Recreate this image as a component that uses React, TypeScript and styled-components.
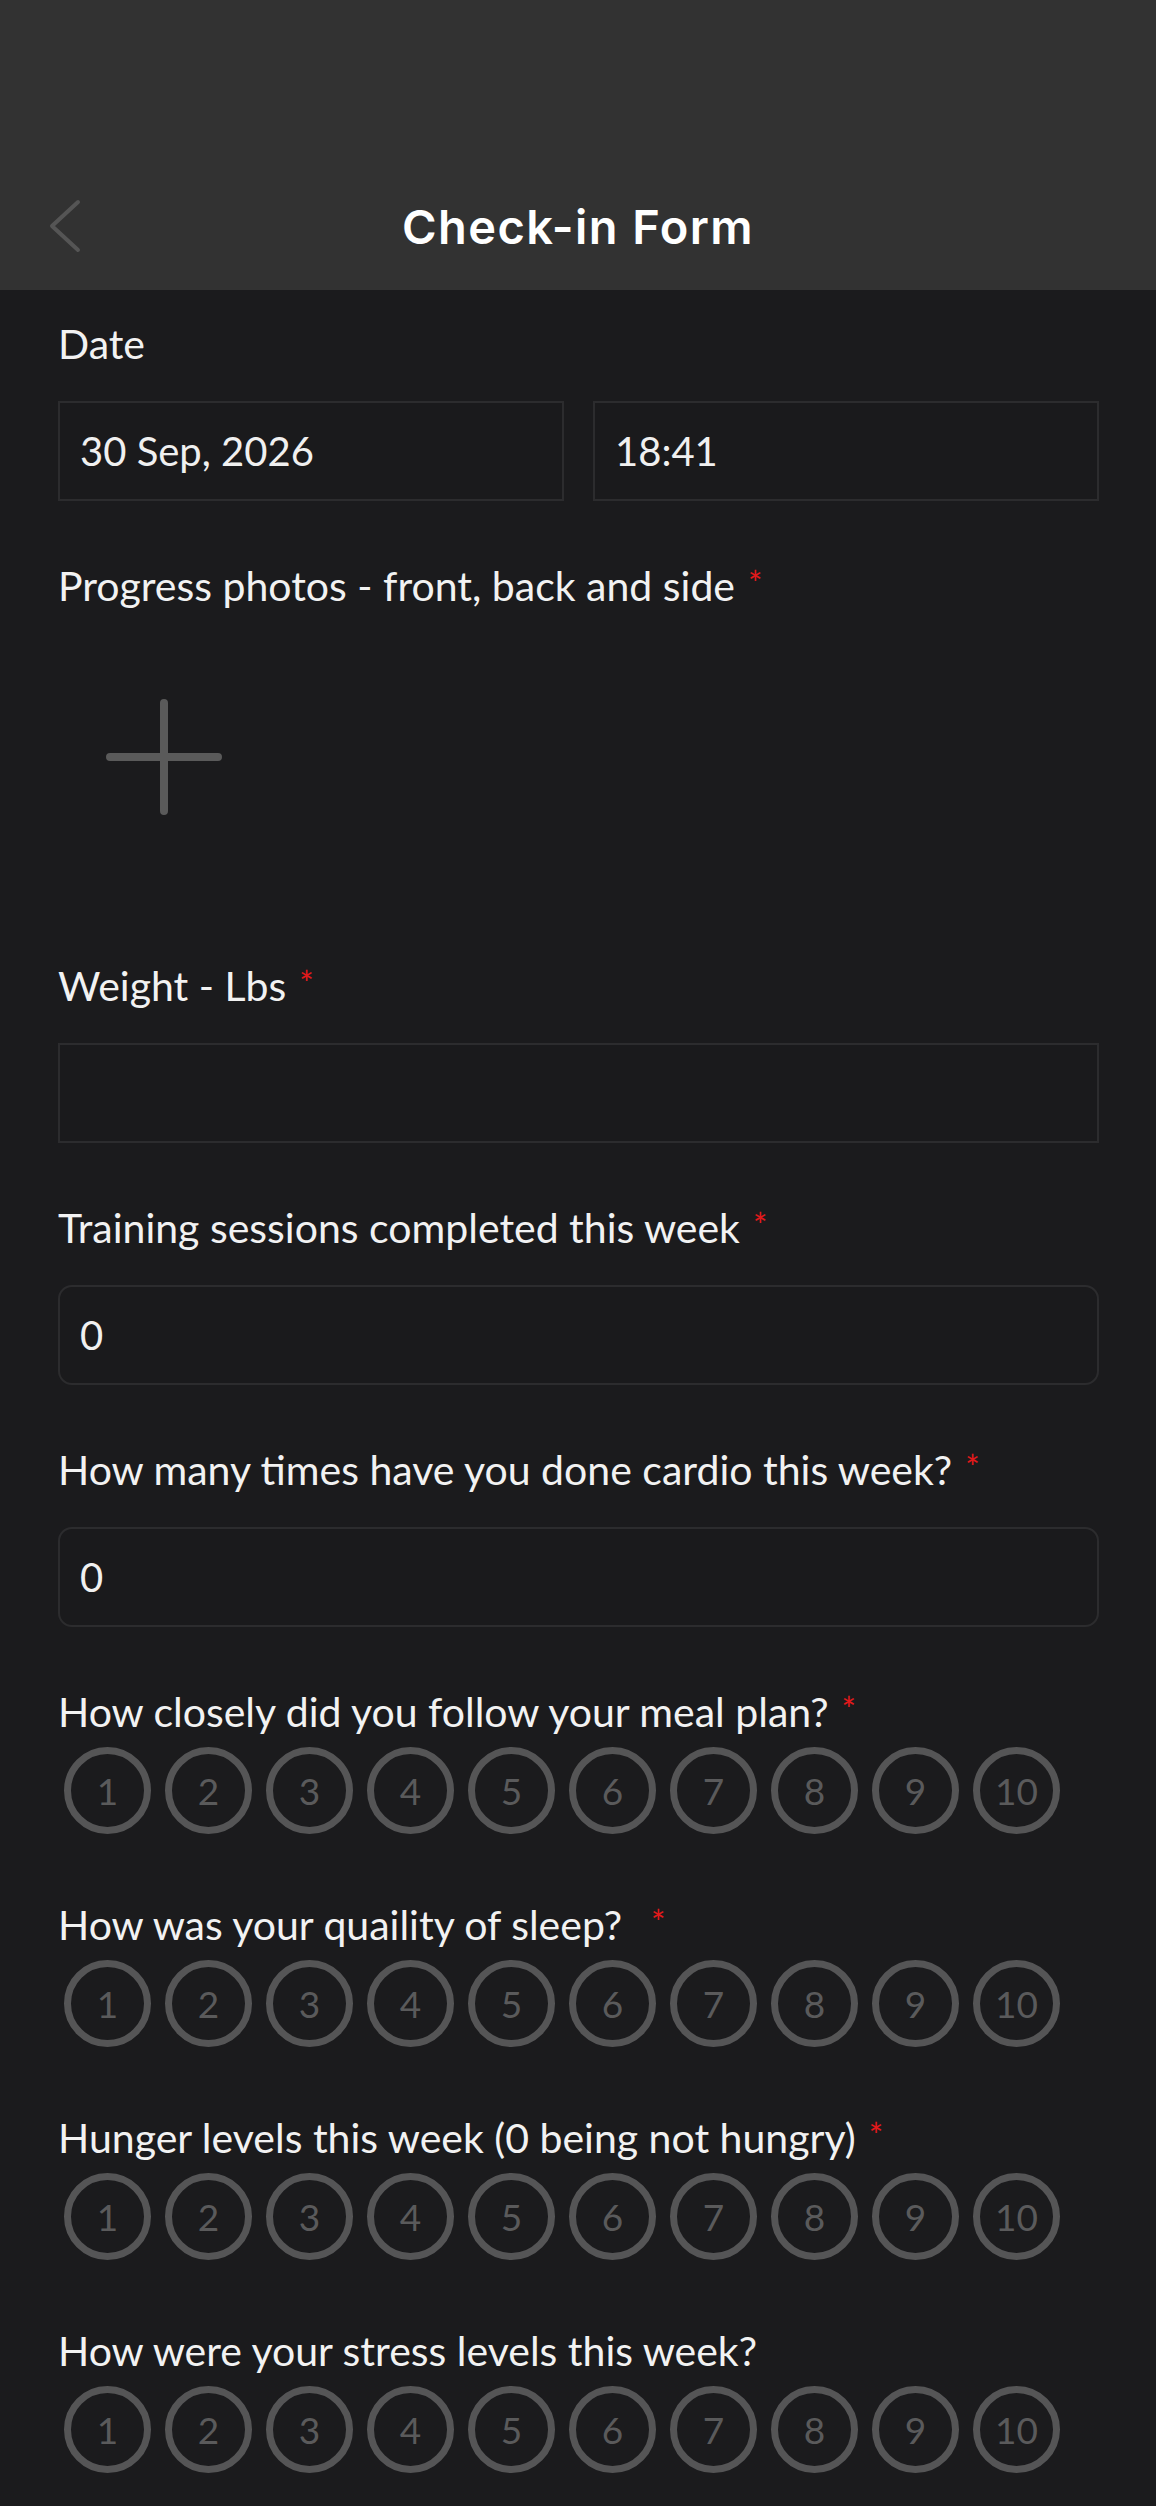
import styled, { createGlobalStyle } from "styled-components";

const GlobalStyle = createGlobalStyle`
  html, body {
    margin: 0;
    padding: 0;
    background: #1b1b1d;
  }
  * {
    box-sizing: border-box;
  }
`;

const Page = styled.div`
  min-height: 2506px;
  background: #1b1b1d;
  font-family: Lato, "Noto Sans", sans-serif;
  color: #f2f2f2;
`;

const Header = styled.header`
  height: 290px;
  background: #323232;
  display: flex;
  flex-direction: column;
  justify-content: flex-end;
`;

const NavBar = styled.div`
  height: 128px;
  display: grid;
  grid-template-columns: 1fr auto 1fr;
  align-items: center;
`;

const BackButton = styled.button`
  justify-self: start;
  margin-left: 46px;
  padding: 0;
  border: none;
  background: none;
  display: flex;
  align-items: center;
`;

const Title = styled.h1`
  margin: 0;
  font-family: Inter, "Noto Sans", sans-serif;
  font-weight: 600;
  font-size: 47px;
  letter-spacing: 1.4px;
  color: #ffffff;
`;

const Form = styled.form`
  display: flex;
  flex-direction: column;
  gap: 57px;
  padding: 26px 57px 29px 58px;
`;

const Field = styled.div<{ $gap: number; $push?: number }>`
  display: flex;
  flex-direction: column;
  gap: ${p => p.$gap}px;
  margin-top: ${p => p.$push ?? 0}px;
`;

const Label = styled.label`
  font-size: 41px;
  line-height: 56px;
  color: #f2f2f2;
  white-space: nowrap;
`;

const Req = styled.span<{ $space?: number }>`
  color: #e3191b;
  font-size: 34px;
  vertical-align: 5px;
  line-height: 1;
  margin-left: ${p => p.$space ?? 13}px;
`;

const Row = styled.div`
  display: grid;
  grid-template-columns: 1fr 1fr;
  gap: 29px;
`;

const Input = styled.div<{ $rounded?: boolean }>`
  height: 100px;
  border: 2px solid #2c2c2e;
  border-radius: ${p => (p.$rounded ? "14px" : "0")};
  background: #1a1a1c;
  display: flex;
  align-items: center;
  padding-left: 20px;
  font-size: 40px;
  color: #f0f0f0;
`;

const PhotoSlot = styled.button`
  width: 212px;
  height: 258px;
  border: none;
  background: none;
  padding: 56px 0 0;
  display: flex;
  align-items: flex-start;
  justify-content: center;
`;

const Scale = styled.div`
  display: flex;
  gap: 14px;
  padding-left: 6px;
`;

const Dot = styled.button`
  width: 87px;
  height: 87px;
  border-radius: 50%;
  border: 7px solid #555556;
  background: transparent;
  padding: 0;
  display: flex;
  align-items: center;
  justify-content: center;
  font-family: Lato, "Noto Sans", sans-serif;
  font-size: 37px;
  color: #5a5a5b;
`;

function Rating() {
  return (
    <Scale>
      {Array.from({ length: 10 }, (_, i) => (
        <Dot key={i} type="button">
          {i + 1}
        </Dot>
      ))}
    </Scale>
  );
}

const ratings = [
  { label: "How closely did you follow your meal plan?", req: true, push: 0 },
  { label: "How was your quaility of sleep?", req: true, space: 29, push: 6 },
  { label: "Hunger levels this week (0 being not hungry)", req: true, push: 6 },
  { label: "How were your stress levels this week?", req: false, push: 6 },
];

function App() {
  return (
    <Page>
      <GlobalStyle />
      <Header>
        <NavBar>
          <BackButton type="button" aria-label="Back">
            <svg width="36" height="56" viewBox="0 0 36 56">
              <path d="M32 4 L6 28 L32 52" fill="none" stroke="#555555" strokeWidth="4" strokeLinecap="round" strokeLinejoin="round" />
            </svg>
          </BackButton>
          <Title>Check-in Form</Title>
          <span />
        </NavBar>
      </Header>

      <Form>
        <Field $gap={29}>
          <Label>Date</Label>
          <Row>
            <Input>30 Sep, 2026</Input>
            <Input>18:41</Input>
          </Row>
        </Field>

        <Field $gap={29}>
          <Label>
            Progress photos - front, back and side<Req>*</Req>
          </Label>
          <PhotoSlot type="button" aria-label="Add photo">
            <svg width="116" height="116" viewBox="0 0 116 116">
              <path d="M58 4 V112 M4 58 H112" stroke="#5a5a5a" strokeWidth="8" strokeLinecap="round" />
            </svg>
          </PhotoSlot>
        </Field>

        <Field $gap={29}>
          <Label>
            Weight - Lbs<Req>*</Req>
          </Label>
          <Input />
        </Field>

        <Field $gap={29}>
          <Label>
            Training sessions completed this week<Req>*</Req>
          </Label>
          <Input $rounded>0</Input>
        </Field>

        <Field $gap={29}>
          <Label>
            How many times have you done cardio this week?<Req>*</Req>
          </Label>
          <Input $rounded>0</Input>
        </Field>

        {ratings.map(r => (
          <Field key={r.label} $gap={7} $push={r.push}>
            <Label>
              {r.label}
              {r.req && <Req $space={r.space}>*</Req>}
            </Label>
            <Rating />
          </Field>
        ))}
      </Form>
    </Page>
  );
}

export default App;
